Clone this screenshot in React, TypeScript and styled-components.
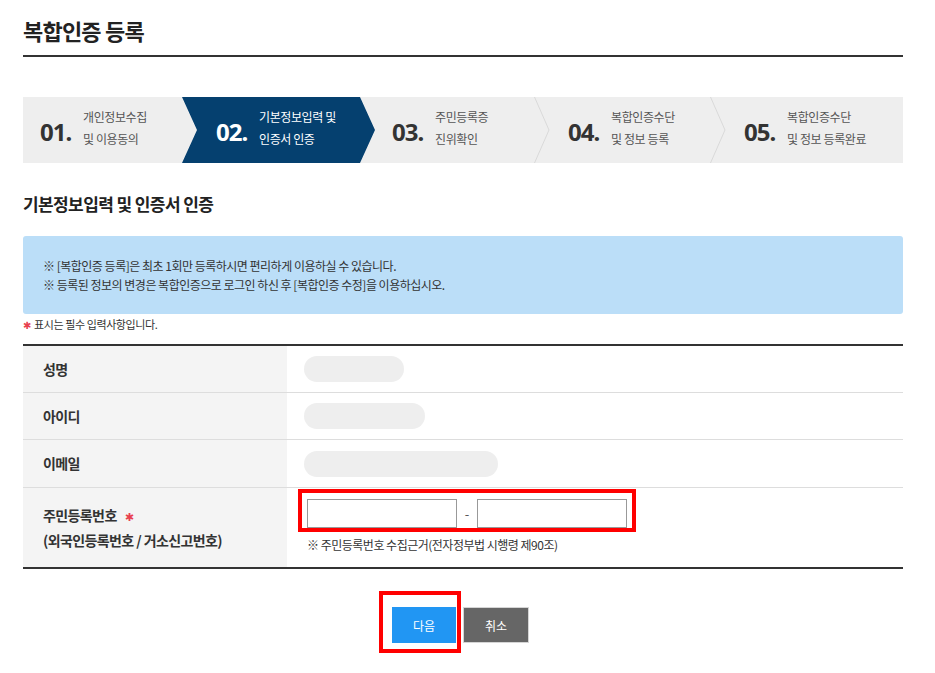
import React from "react";
import styled, { createGlobalStyle } from "styled-components";

const GlobalStyle = createGlobalStyle`
  body {
    margin: 0;
    background: #fff;
    font-family: "Noto Sans CJK KR", "Noto Sans", sans-serif;
    color: #333;
  }
  * {
    box-sizing: border-box;
  }
`;

const Page = styled.div`
  width: 880px;
  margin-left: 23px;
  padding-top: 15px;
  padding-bottom: 20px;
`;

const PageTitle = styled.h1`
  margin: 0;
  font-size: 22px;
  line-height: 30px;
  font-weight: 700;
  color: #222;
  letter-spacing: -0.8px;
  padding-bottom: 10px;
  border-bottom: 2px solid #333;
`;

const Steps = styled.ol`
  display: flex;
  list-style: none;
  margin: 40px 0 0;
  padding: 0;
  height: 66px;
  background: #eeeeee;
`;

const Step = styled.li<{ $active?: boolean }>`
  position: relative;
  flex: 0 0 176px;
  display: flex;
  align-items: center;
  padding-left: 17px;
  color: ${(p) => (p.$active ? "#fff" : "#333")};

  &::before {
    content: "";
    display: ${(p) => (p.$active ? "block" : "none")};
    position: absolute;
    top: 0;
    bottom: 0;
    left: -17px;
    right: 0;
    background: #05406f;
    clip-path: polygon(
      0 0,
      calc(100% - 15px) 0,
      100% 50%,
      calc(100% - 15px) 100%,
      0 100%,
      15px 50%
    );
  }
`;

const StepNum = styled.span`
  position: relative;
  width: 43px;
  font-family: "Noto Sans", "Open Sans", sans-serif;
  font-size: 24px;
  font-weight: 700;
  letter-spacing: -1px;
  margin-top: 2px;
`;

const StepLabel = styled.span<{ $active?: boolean }>`
  position: relative;
  font-size: 12px;
  line-height: 22px;
  margin-top: -4px;
  color: ${(p) => (p.$active ? "#fff" : "#555")};
  letter-spacing: -0.4px;
`;

const Divider = styled.svg`
  position: absolute;
  top: 0;
  right: 1px;
  width: 16px;
  height: 66px;
`;

const SectionTitle = styled.h2`
  margin: 29px 0 0;
  font-size: 17px;
  line-height: 24px;
  font-weight: 700;
  color: #222;
  letter-spacing: -0.6px;
`;

const InfoBox = styled.div`
  margin-top: 20px;
  padding: 20px;
  background: #bbdef8;
  border-radius: 3px;
  font-size: 12px;
  line-height: 19px;
  color: #333;
  letter-spacing: -0.5px;
`;

const RequiredNote = styled.p`
  margin: 2px 0 0;
  font-size: 11px;
  line-height: 16px;
  color: #333;
  letter-spacing: -0.4px;
`;

const Star = styled.span`
  color: #e8414f;
  font-family: "DejaVu Sans", sans-serif;
  font-size: 10px;
  margin-right: 3px;
`;

const Table = styled.div`
  margin-top: 10px;
  border-top: 2px solid #333;
  border-bottom: 2px solid #333;
`;

const Row = styled.div<{ $height: number }>`
  display: grid;
  grid-template-columns: 264px 1fr;
  height: ${(p) => p.$height}px;
  & + & {
    border-top: 1px solid #dddddd;
  }
`;

const Label = styled.div`
  display: flex;
  flex-direction: column;
  justify-content: center;
  padding-left: 20px;
  background: #f4f4f4;
  font-size: 14px;
  font-weight: 700;
  line-height: 23px;
  color: #333;
  letter-spacing: -0.6px;
`;

const LabelStar = styled(Star)`
  margin-left: 8px;
  font-size: 11px;
`;

const Value = styled.div`
  display: flex;
  flex-direction: column;
  justify-content: center;
  padding-left: 20px;
`;

const Pill = styled.div<{ $w: number }>`
  width: ${(p) => p.$w}px;
  height: 26px;
  margin-left: -3px;
  border-radius: 13px;
  background: #eeeeee;
`;

const InputRow = styled.div`
  position: relative;
  display: flex;
  align-items: center;
  width: 320px;
  margin-top: -2px;
`;

const Input = styled.input`
  width: 150px;
  height: 29px;
  border: 1px solid #999;
  padding: 0 6px;
  font-size: 12px;
  outline: none;
`;

const Dash = styled.span`
  width: 20px;
  text-align: center;
  font-size: 13px;
  color: #555;
`;

const Highlight = styled.div<{ $t: number; $r: number; $b: number; $l: number }>`
  position: absolute;
  top: ${(p) => -p.$t}px;
  right: ${(p) => -p.$r}px;
  bottom: ${(p) => -p.$b}px;
  left: ${(p) => -p.$l}px;
  border: 4px solid #ff0000;
  pointer-events: none;
`;

const FieldNote = styled.p`
  margin: 8px 0 0;
  font-size: 12px;
  line-height: 18px;
  color: #333;
  letter-spacing: -0.5px;
`;

const Buttons = styled.div`
  display: flex;
  justify-content: center;
  gap: 7px;
  margin-top: 38px;
  padding-right: 5px;
`;

const ButtonWrap = styled.div`
  position: relative;
`;

const Button = styled.button<{ $primary?: boolean }>`
  width: ${(p) => (p.$primary ? 64 : 66)}px;
  height: 36px;
  border: ${(p) => (p.$primary ? "none" : "1px solid #d5d5d5")};
  background: ${(p) => (p.$primary ? "#2196f3" : "#666666")};
  color: #fff;
  font-family: "Noto Sans CJK KR", sans-serif;
  font-size: 12px;
  cursor: pointer;
`;

const steps = [
  { num: "01.", label: ["개인정보수집", "및 이용동의"] },
  { num: "02.", label: ["기본정보입력 및", "인증서 인증"] },
  { num: "03.", label: ["주민등록증", "진위확인"] },
  { num: "04.", label: ["복합인증수단", "및 정보 등록"] },
  { num: "05.", label: ["복합인증수단", "및 정보 등록완료"] },
];

const activeStep = 1;

function App() {
  return (
    <>
      <GlobalStyle />
      <Page>
        <PageTitle>복합인증 등록</PageTitle>

        <Steps>
          {steps.map((s, i) => {
            const active = i === activeStep;
            const showDivider =
              !active && i !== activeStep - 1 && i !== steps.length - 1;
            return (
              <Step key={s.num} $active={active}>
                <StepNum>{s.num}</StepNum>
                <StepLabel $active={active}>
                  {s.label[0]}
                  <br />
                  {s.label[1]}
                </StepLabel>
                {showDivider && (
                  <Divider viewBox="0 0 16 66">
                    <polyline
                      points="0.5,0 15,33 0.5,66"
                      fill="none"
                      stroke="#d9d9d9"
                      strokeWidth="1"
                    />
                  </Divider>
                )}
              </Step>
            );
          })}
        </Steps>

        <SectionTitle>기본정보입력 및 인증서 인증</SectionTitle>

        <InfoBox>
          ※ [복합인증 등록]은 최초 1회만 등록하시면 편리하게 이용하실 수 있습니다.
          <br />
          ※ 등록된 정보의 변경은 복합인증으로 로그인 하신 후 [복합인증 수정]을
          이용하십시오.
        </InfoBox>

        <RequiredNote>
          <Star>✱</Star>표시는 필수 입력사항입니다.
        </RequiredNote>

        <Table>
          <Row $height={46}>
            <Label>성명</Label>
            <Value>
              <Pill $w={100} />
            </Value>
          </Row>
          <Row $height={47}>
            <Label>아이디</Label>
            <Value>
              <Pill $w={121} />
            </Value>
          </Row>
          <Row $height={48}>
            <Label>이메일</Label>
            <Value>
              <Pill $w={194} />
            </Value>
          </Row>
          <Row $height={80}>
            <Label>
              <span>
                주민등록번호<LabelStar>✱</LabelStar>
              </span>
              <span>(외국인등록번호 / 거소신고번호)</span>
            </Label>
            <Value>
              <InputRow>
                <Input type="text" />
                <Dash>-</Dash>
                <Input type="password" />
                <Highlight $t={10} $r={9} $b={4} $l={9} />
              </InputRow>
              <FieldNote>※ 주민등록번호 수집근거(전자정부법 시행령 제90조)</FieldNote>
            </Value>
          </Row>
        </Table>

        <Buttons>
          <ButtonWrap>
            <Button $primary>다음</Button>
            <Highlight $t={16} $r={5} $b={10} $l={13} />
          </ButtonWrap>
          <Button>취소</Button>
        </Buttons>
      </Page>
    </>
  );
}

export default App;
